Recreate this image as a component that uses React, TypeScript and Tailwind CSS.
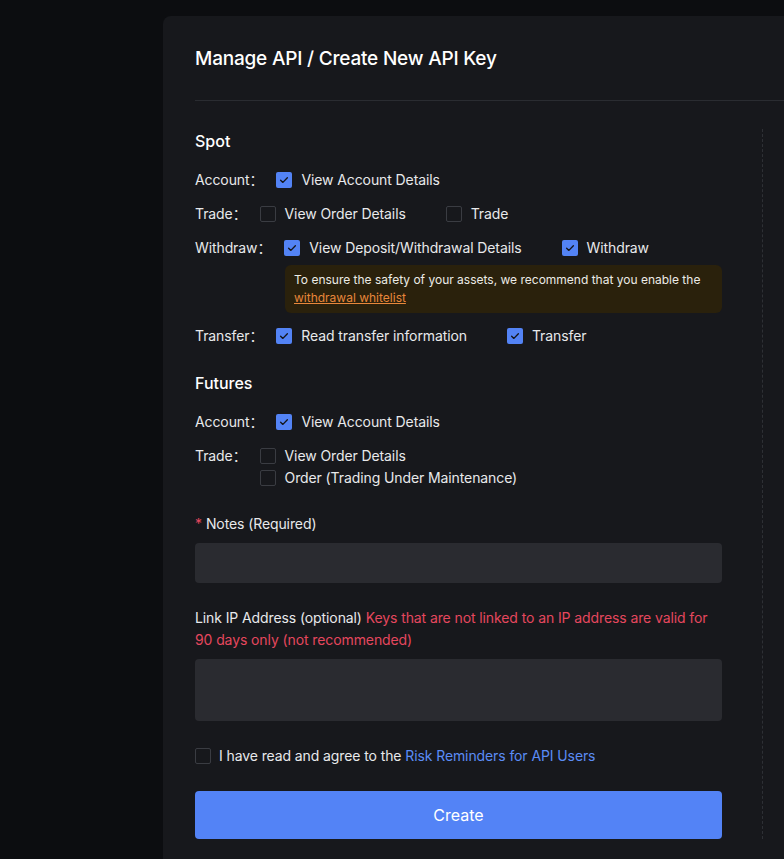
import React from "react";

function Check({ checked }: { checked?: boolean }) {
  if (checked) {
    return (
      <span className="grid h-4 w-4 shrink-0 place-items-center rounded-[2px] bg-[#5383f5]">
        <svg viewBox="0 0 16 16" className="h-3 w-3" fill="none">
          <path d="M3.5 8.2l3 3 6-6.2" stroke="#15161a" strokeWidth="1.8" strokeLinecap="round" strokeLinejoin="round" />
        </svg>
      </span>
    );
  }
  return <span className="h-4 w-4 shrink-0 rounded-[2px] border border-[#3a3c42]" />;
}

function Option({ label, checked, last }: { label: string; checked?: boolean; last?: boolean }) {
  return (
    <span className={`flex items-center gap-[9px] ${last ? "" : "mr-10"}`}>
      <Check checked={checked} />
      <span>{label}</span>
    </span>
  );
}

function Row({ label, children, className = "" }: { label: string; children: React.ReactNode; className?: string }) {
  return (
    <div className={`flex items-start text-sm leading-[22px] tracking-[-0.1px] text-[#e8e9eb] ${className}`}>
      <span className="mr-[13px] shrink-0">{label}：</span>
      {children}
    </div>
  );
}

export default function App() {
  return (
    <main
      className="h-screen overflow-hidden bg-[#0c0d10] pl-[163px] pt-4 text-[#e8e9eb]"
      style={{ fontFamily: "Inter, 'Noto Sans CJK SC', sans-serif" }}
    >
      <section className="w-[900px] rounded-tl-lg bg-[#17181c] pb-10">
        <div className="ml-8 border-b border-[#2a2c31] pb-[27px] pt-[29px]">
          <h1 className="text-[19px] leading-7 font-medium tracking-[-0.2px] text-white">Manage API / Create New API Key</h1>
        </div>

        <div className="flex pl-8 pt-7">
          <div className="w-[527px]">
            <h2 className="text-base leading-6 font-medium text-white">Spot</h2>

            <div className="mt-4 flex flex-col gap-3">
              <Row label="Account">
                <span className="flex items-center">
                  <Option label="View Account Details" checked last />
                </span>
              </Row>
              <Row label="Trade">
                <span className="flex items-center">
                  <Option label="View Order Details" />
                  <Option label="Trade" last />
                </span>
              </Row>
              <div>
                <Row label="Withdraw">
                  <span className="flex items-center">
                    <Option label="View Deposit/Withdrawal Details" checked />
                    <Option label="Withdraw" checked last />
                  </span>
                </Row>
                <div className="ml-[90px] mt-[6px] rounded-md bg-[#2a210c] py-[6px] pl-[9px] pr-2 text-xs leading-[18px] text-[#ecebe6]">
                  To ensure the safety of your assets, we recommend that you enable the
                  <br />
                  <a className="text-[#e8873b] underline">withdrawal whitelist</a>
                </div>
              </div>
              <Row label="Transfer">
                <span className="flex items-center">
                  <Option label="Read transfer information" checked />
                  <Option label="Transfer" checked last />
                </span>
              </Row>
            </div>

            <h2 className="mt-6 text-base leading-6 font-medium text-white">Futures</h2>

            <div className="mt-4 flex flex-col gap-3">
              <Row label="Account">
                <span className="flex items-center">
                  <Option label="View Account Details" checked last />
                </span>
              </Row>
              <Row label="Trade">
                <span className="flex flex-col">
                  <Option label="View Order Details" last />
                  <Option label="Order (Trading Under Maintenance)" last />
                </span>
              </Row>
            </div>

            <div className="mt-6 text-sm leading-[22px] tracking-[-0.1px] text-[#e8e9eb]">
              <span className="mr-1 text-[#e5475e]">*</span>Notes (Required)
            </div>
            <input className="mt-2 block h-10 w-full rounded bg-[#2a2b30] px-3 text-sm outline-none" />

            <p className="mt-6 text-sm leading-[22px] tracking-[-0.1px] text-[#e8e9eb]">
              Link IP Address (optional){" "}
              <span className="text-[#e5475e]">
                Keys that are not linked to an IP address are valid for
                <br />
                90 days only (not recommended)
              </span>
            </p>
            <textarea className="mt-2 block h-[62px] w-full resize-none rounded bg-[#2a2b30] px-3 py-2 text-sm outline-none" />

            <div className="mt-6 flex items-center gap-2 text-sm leading-[22px] tracking-[-0.1px]">
              <Check />
              <span>
                I have read and agree to the <a className="text-[#5b8cf6]">Risk Reminders for API Users</a>
              </span>
            </div>

            <button className="mt-6 h-12 w-full rounded bg-[#5383f6] text-base text-white">Create</button>
          </div>

          <div className="ml-10 flex-1 border-l border-dashed border-[#2e3035]" />
        </div>
      </section>
    </main>
  );
}
